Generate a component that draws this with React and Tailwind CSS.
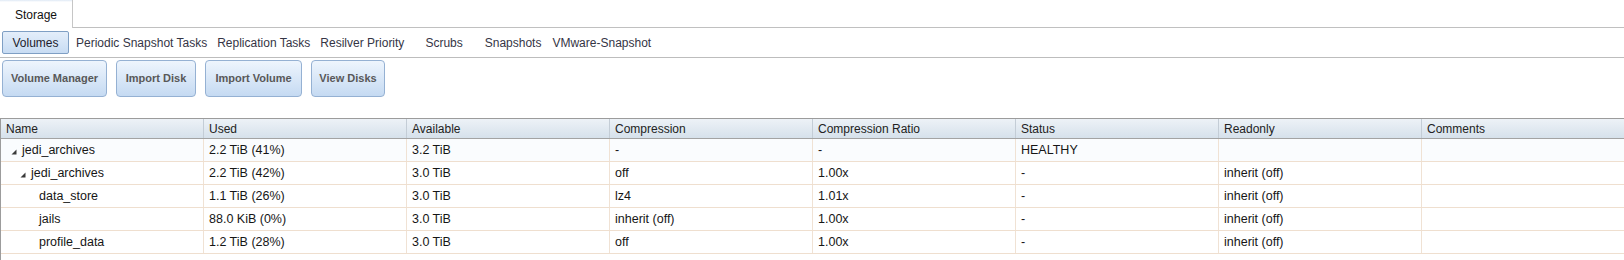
import React from 'react';

const navTabs = [
  { name: 'Periodic Snapshot Tasks', ml: 'ml-[7px]' },
  { name: 'Replication Tasks', ml: 'ml-[10px]' },
  { name: 'Resilver Priority', ml: 'ml-[10px]' },
  { name: 'Scrubs', ml: 'ml-[21px]' },
  { name: 'Snapshots', ml: 'ml-[22px]' },
  { name: 'VMware-Snapshot', ml: 'ml-[11px]' },
];

const actions = [
  { name: 'Volume Manager', w: 'w-[105px]' },
  { name: 'Import Disk', w: 'w-[80px]' },
  { name: 'Import Volume', w: 'w-[97px]' },
  { name: 'View Disks', w: 'w-[74px]' },
];

const columns = ['Name', 'Used', 'Available', 'Compression', 'Compression Ratio', 'Status', 'Readonly', 'Comments'];

const rows = [
  { level: 0, toggle: true, cells: ['jedi_archives', '2.2 TiB (41%)', '3.2 TiB', '-', '-', 'HEALTHY', '', ''] },
  { level: 1, toggle: true, cells: ['jedi_archives', '2.2 TiB (42%)', '3.0 TiB', 'off', '1.00x', '-', 'inherit (off)', ''] },
  { level: 2, toggle: false, cells: ['data_store', '1.1 TiB (26%)', '3.0 TiB', 'lz4', '1.01x', '-', 'inherit (off)', ''] },
  { level: 2, toggle: false, cells: ['jails', '88.0 KiB (0%)', '3.0 TiB', 'inherit (off)', '1.00x', '-', 'inherit (off)', ''] },
  { level: 2, toggle: false, cells: ['profile_data', '1.2 TiB (28%)', '3.0 TiB', 'off', '1.00x', '-', 'inherit (off)', ''] },
];

const indent = ['pl-[10px]', 'pl-[19px]', 'pl-[38px]'];

const Expando = () => (
  <svg width="6" height="6" viewBox="0 0 6 6" className="mr-[5px] mt-[3px] shrink-0">
    <polygon points="5.5,0.5 5.5,5.5 0.5,5.5" fill="#3a3a3a" />
  </svg>
);

export default function App() {
  return (
    <div className="w-[1624px] h-[260px] overflow-hidden bg-white font-['Liberation_Sans',Arial,sans-serif] text-[12px] text-[#222]">
      {/* Top tab strip */}
      <div className="flex h-[28px]">
        <div className="w-[73px] h-[28px] border-r border-[#c6c6c6] bg-gradient-to-b from-[#dfe9f5] via-white to-white bg-[length:100%_4px] bg-no-repeat flex items-center pl-[15px] pt-[2px] text-[#111]">
          Storage
        </div>
        <div className="flex-1 border-b border-[#c0c0c0]" />
      </div>

      {/* Sub navigation */}
      <div className="flex items-center h-[30px] border-b border-[#bdbdbd] pl-[2px] text-[#353545]">
        <div className="h-[23px] w-[67px] flex items-center justify-center rounded-[2px] border border-[#7f9fc4] bg-gradient-to-b from-[#e4eefa] to-[#c8dcf3] text-[#1c1c2c]">
          Volumes
        </div>
        {navTabs.map((t) => (
          <span key={t.name} className={t.ml}>{t.name}</span>
        ))}
      </div>

      {/* Action buttons */}
      <div className="flex gap-[9px] pl-[2px] pt-[2px]">
        {actions.map((a) => (
          <button
            key={a.name}
            className={`${a.w} h-[37px] rounded-[4px] border border-[#95b1d3] bg-gradient-to-b from-[#eef5fd] to-[#c5daf2] text-[11px] font-bold text-[#585858] flex items-center justify-center`}
          >
            {a.name}
          </button>
        ))}
      </div>

      {/* Volumes tree grid */}
      <div className="mt-[21px] border-l border-t border-[#9c9c9c] h-[200px]">
        <div className="grid grid-cols-[repeat(7,203px)_1fr] h-[20px] border-b border-[#a3a3a3] bg-gradient-to-b from-[#edf2f7] to-[#d6e1eb]">
          {columns.map((c, i) => (
            <div
              key={c}
              className={`flex items-center pl-[5px] ${i < 7 ? 'border-r border-[#c4cdd6]' : ''}`}
            >
              {c}
            </div>
          ))}
        </div>
        {rows.map((r, ri) => (
          <div
            key={ri}
            className={`grid grid-cols-[repeat(7,203px)_1fr] h-[23px] border-b border-[#efdfcf] text-[12.5px] text-[#161616] ${ri === 0 ? 'bg-[#fafcfe]' : 'bg-white'}`}
          >
            {r.cells.map((c, ci) => (
              <div
                key={ci}
                className={`flex items-center ${ci === 0 ? indent[r.level] : 'pl-[5px]'} ${ci < 7 ? 'border-r border-[#f0e2d4]' : ''}`}
              >
                {ci === 0 && r.toggle && <Expando />}
                {c}
              </div>
            ))}
          </div>
        ))}
      </div>
    </div>
  );
}
